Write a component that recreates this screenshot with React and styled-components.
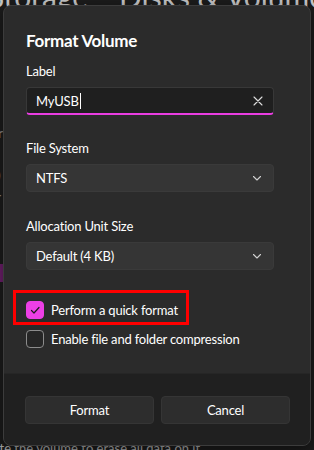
import styled, { createGlobalStyle } from "styled-components";

const GlobalStyle = createGlobalStyle`
  body {
    margin: 0;
    background: #1c1c1c;
    font-family: Lato, "Noto Sans", sans-serif;
  }
`;

const Screen = styled.div`
  position: relative;
  width: 314px;
  height: 450px;
  overflow: hidden;
  background: #1c1c1c;
  padding-top: 5px;
  box-sizing: border-box;
`;

const BackText = styled.div`
  position: absolute;
  left: ${(props) => props.left}px;
  top: ${(props) => props.top}px;
  font-size: ${(props) => props.size}px;
  color: ${(props) => props.color || "#c8c8c8"};
  white-space: nowrap;
  line-height: 1;
`;

const AccentBar = styled.div`
  position: absolute;
  left: 0;
  top: 264px;
  width: 3px;
  height: 18px;
  background: #6e1f6c;
`;

const Dialog = styled.div`
  position: relative;
  z-index: 1;
  margin-left: 3px;
  width: 308px;
  height: 441px;
  box-sizing: border-box;
  border: 1px solid #3c3c3c;
  border-radius: 8px;
  background: #2b2b2b;
  display: flex;
  flex-direction: column;
  overflow: hidden;
  box-shadow: 0 4px 16px rgba(0, 0, 0, 0.5);
  font-size: 13px;
  letter-spacing: -0.2px;
`;

const Body = styled.div`
  flex: 1;
  padding: 21px 22px 0;
`;

const Title = styled.h1`
  margin: 0;
  font-size: 17px;
  font-weight: 700;
  letter-spacing: -0.3px;
  line-height: 28px;
  color: #ffffff;
`;

const FieldLabel = styled.div`
  margin-top: ${(props) => props.gap}px;
  margin-bottom: 6px;
  line-height: 20px;
  color: #ffffff;
`;

const TextBox = styled.div`
  width: 248px;
  height: 28px;
  box-sizing: border-box;
  display: flex;
  align-items: center;
  padding: 0 10px 0 9px;
  background: #1f1f1f;
  border: 1px solid #383838;
  border-bottom: 2px solid #ea3de2;
  border-radius: 4px;
  color: #ffffff;
`;

const Caret = styled.span`
  display: inline-block;
  width: 1px;
  height: 16px;
  margin-left: 1px;
  background: #ffffff;
`;

const Grow = styled.span`
  flex: 1;
  display: flex;
  align-items: center;
`;

const Select = styled.div`
  width: 248px;
  height: 28px;
  box-sizing: border-box;
  display: flex;
  align-items: center;
  justify-content: space-between;
  padding: 0 11px 0 9px;
  background: #353535;
  border: 1px solid #3a3a3a;
  border-radius: 4px;
  color: #ffffff;
`;

const Options = styled.div`
  margin-top: 31px;
  display: flex;
  flex-direction: column;
  gap: 11px;
`;

const Row = styled.div`
  position: relative;
  display: flex;
  align-items: center;
  gap: 7px;
  height: 18px;
  color: #ffffff;

  ${(props) =>
    props.highlight &&
    `
    &::before {
      content: "";
      position: absolute;
      left: -13px;
      top: -11px;
      width: 176px;
      height: 35px;
      box-sizing: border-box;
      border: 3px solid #ff0000;
    }
  `}
`;

const Box = styled.span`
  width: 18px;
  height: 18px;
  box-sizing: border-box;
  border-radius: 4px;
  display: flex;
  align-items: center;
  justify-content: center;
  background: ${(props) => (props.checked ? "#ee3fe6" : "#262626")};
  border: 1px solid ${(props) => (props.checked ? "#ee3fe6" : "#8c8c8c")};
`;

const Footer = styled.div`
  height: 72px;
  box-sizing: border-box;
  padding: 22px 20px 0 21px;
  background: #202020;
  border-top: 1px solid #262626;
  display: grid;
  grid-template-columns: 1fr 1fr;
  column-gap: 7px;
  align-items: start;
`;

const Button = styled.button`
  height: 28px;
  border: 1px solid #353535;
  border-radius: 4px;
  background: #2d2d2d;
  color: #ffffff;
  font-family: inherit;
  font-size: 13px;
  letter-spacing: inherit;
  padding: 0;
`;

const Chevron = () => (
  <svg width="10" height="10" viewBox="0 0 10 10">
    <path d="M1.5 3.5 L5 7 L8.5 3.5" fill="none" stroke="#d0d0d0" strokeWidth="1.1" strokeLinecap="round" strokeLinejoin="round" />
  </svg>
);

const ClearIcon = () => (
  <svg width="10" height="10" viewBox="0 0 10 10">
    <path d="M1 1 L9 9 M9 1 L1 9" fill="none" stroke="#dcdcdc" strokeWidth="1.1" strokeLinecap="round" />
  </svg>
);

const Check = () => (
  <svg width="12" height="12" viewBox="0 0 12 12">
    <path d="M2.5 6.5 L5 9 L10 3.5" fill="none" stroke="#1c1c1c" strokeWidth="1.2" strokeLinecap="round" strokeLinejoin="round" />
  </svg>
);

export default function App() {
  return (
    <Screen>
      <GlobalStyle />
      <BackText left={-12} top={-19} size={30}>Storage</BackText>
      <BackText left={119} top={-19} size={30}>Disks &amp; Volumes</BackText>
      <BackText left={-2} top={126} size={14} color="#8a8a8a">r</BackText>
      <BackText left={-3} top={168} size={14} color="#8a8a8a">)</BackText>
      <BackText left={-4} top={190} size={14} color="#8a8a8a">r</BackText>
      <AccentBar />
      <BackText left={-27} top={442} size={13} color="#b0b0b0">Delete the volume to erase all data on it.</BackText>

      <Dialog>
        <Body>
          <Title>Format Volume</Title>

          <FieldLabel gap={6}>Label</FieldLabel>
          <TextBox>
            <Grow>
              MyUSB
              <Caret />
            </Grow>
            <ClearIcon />
          </TextBox>

          <FieldLabel gap={23}>File System</FieldLabel>
          <Select>
            NTFS
            <Chevron />
          </Select>

          <FieldLabel gap={24}>Allocation Unit Size</FieldLabel>
          <Select>
            Default (4 KB)
            <Chevron />
          </Select>

          <Options>
            <Row highlight>
              <Box checked>
                <Check />
              </Box>
              Perform a quick format
            </Row>
            <Row>
              <Box />
              Enable file and folder compression
            </Row>
          </Options>
        </Body>

        <Footer>
          <Button>Format</Button>
          <Button>Cancel</Button>
        </Footer>
      </Dialog>
    </Screen>
  );
}
